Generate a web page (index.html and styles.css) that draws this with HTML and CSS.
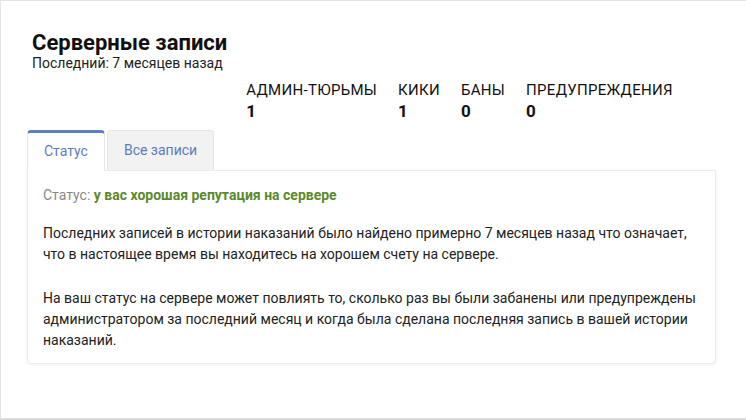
FILE: index.html
```html
<!DOCTYPE html>
<html lang="ru">
<head>
    <meta charset="UTF-8">
    <meta name="viewport" content="width=device-width, initial-scale=1.0">
    <title>Серверные записи</title>

    <link rel="stylesheet" href="styles.css">
</head>
<body>

    <div class="panel">
        <!-- Header with title and punishment counters -->
        <div class="header">
            <div class="title-block">
                <h1>Серверные записи</h1>
                <div class="subtitle">Последний: 7 месяцев назад</div>
            </div>

            <div class="stats">
                <div class="stat">
                    <div class="stat-label">Админ-тюрьмы</div>
                    <div class="stat-value">1</div>
                </div>
                <div class="stat">
                    <div class="stat-label">Кики</div>
                    <div class="stat-value">1</div>
                </div>
                <div class="stat">
                    <div class="stat-label">Баны</div>
                    <div class="stat-value">0</div>
                </div>
                <div class="stat">
                    <div class="stat-label">Предупреждения</div>
                    <div class="stat-value">0</div>
                </div>
            </div>
        </div>

        <!-- Tabs -->
        <div class="tabs">
            <div class="tab active">Статус</div>
            <div class="tab">Все записи</div>
        </div>

        <div class="tab-content">
            <p class="status-line">Статус: <span class="status-good">у вас хорошая репутация на сервере</span></p>
            <p>Последних записей в истории наказаний было найдено примерно 7 месяцев назад что означает, что в настоящее время вы находитесь на хорошем счету на сервере.</p>
            <p>На ваш статус на сервере может повлиять то, сколько раз вы были забанены или предупреждены администратором за последний месяц и когда была сделана последняя запись в вашей истории наказаний.</p>
        </div>
    </div>

</body>
</html>
```

FILE: styles.css
```css
/* General body styles */
body {
    margin: 0;
    padding: 0;
    background: #fff;
    color: #222;
    font-family: Roboto, 'Noto Sans', sans-serif;
}

/* Outer panel */
.panel {
    height: 420px;
    box-sizing: border-box;
    border-top: 1px solid #e4e4e4;
    border-left: 1px solid #e4e4e4;
    border-bottom: 2px solid #dcdcdc;
    padding: 30px 30px 0 26px;
}

/* Header */
.header {
    display: flex;
    gap: 19px;
    padding-left: 5px;
}

h1 {
    margin: 0;
    font-size: 22px;
    line-height: 24px;
    font-weight: bold;
    color: #111;
}

.subtitle {
    font-size: 14px;
    line-height: 16px;
    color: #222;
}

/* Counters */
.stats {
    display: flex;
    gap: 21px;
    margin-top: 50px;
}

.stat-label {
    font-size: 15px;
    line-height: 18px;
    letter-spacing: 0.3px;
    text-transform: uppercase;
    color: #111;
}

.stat-value {
    margin-top: 2px;
    font-size: 17px;
    line-height: 20px;
    font-weight: bold;
    color: #111;
}

/* Tabs */
.tabs {
    display: flex;
    gap: 2px;
    margin-top: 9px;
}

.tab {
    padding: 0 16px;
    height: 40px;
    line-height: 38px;
    font-size: 14px;
    color: #5b7cc4;
    background: #f2f2f2;
    border: 1px solid #e6e6e6;
    border-bottom: none;
    border-radius: 4px 4px 0 0;
    box-sizing: border-box;
}

.tab.active {
    background: #fff;
    border-top: 3px solid #5a7fc6;
    line-height: 36px;
    position: relative;
    z-index: 1;
    height: 41px;
}

/* Card with the selected tab */
.tab-content {
    border: 1px solid #ececec;
    border-radius: 0 0 4px 4px;
    box-shadow: 0 1px 3px rgba(0, 0, 0, 0.06);
    padding: 14px 16px 12px 15px;
    margin-top: -1px;
}

.tab-content p {
    margin: 0 0 23px;
    font-size: 14px;
    line-height: 21px;
    color: #222;
}

.tab-content p:last-child {
    margin-bottom: 0;
}

.tab-content .status-line {
    margin-bottom: 17px;
    color: #888;
}

.status-good {
    color: #5b8a2b;
    font-weight: bold;
}
```
